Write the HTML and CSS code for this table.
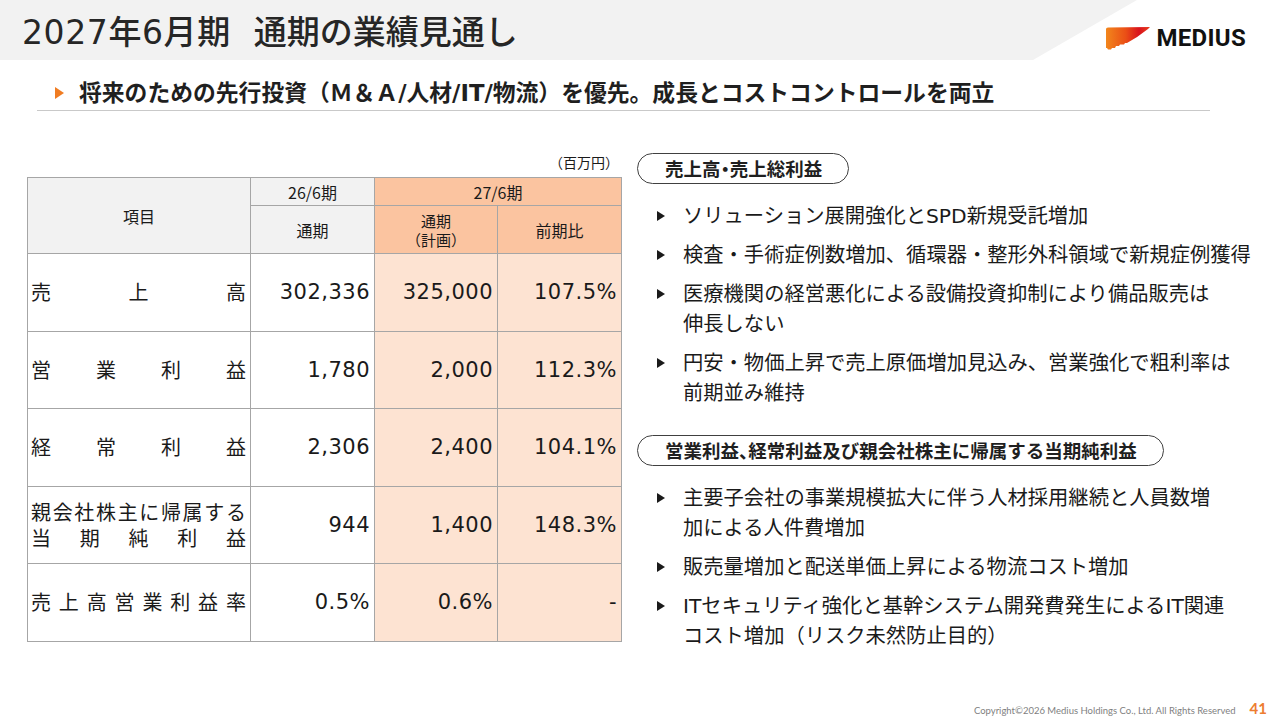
FILE: index.html
```html
<!DOCTYPE html>
<html lang="ja">
<head>
<meta charset="utf-8">
<title>2027年6月期 通期の業績見通し</title>
<link rel="stylesheet" href="styles.css">
</head>
<body>
<div class="slide">
  <header class="top">
    <h1 class="title"><span>2027年6月期</span><span>通期の業績見通し</span></h1>
    <div class="logo">
      <svg class="logo-mark" width="44" height="24" viewBox="0 0 44 24">
        <defs>
          <linearGradient id="lg" x1="0" y1="0" x2="1" y2="0">
            <stop offset="0" stop-color="#f2861c"/>
            <stop offset="0.45" stop-color="#ea4f16"/>
            <stop offset="0.75" stop-color="#d9121c"/>
            <stop offset="1" stop-color="#e8401e"/>
          </linearGradient>
        </defs>
        <path d="M0,3 Q0,1.5 2,1.5 L44,1 L42,3 Q32,11 21,17 L19,17 L18,18.5 L14,18.5 L13,20 L10,20 L9,22 L6,22 L5,23.5 L2,23.5 L1,22 L0,22 Z" fill="url(#lg)"/>
      </svg>
      <span class="logo-text">MEDIUS</span>
    </div>
  </header>

  <div class="lead">
    <span class="lead-mark"></span>
    <span class="lead-text">将来のための先行投資（Ｍ＆Ａ/人材/IT/物流）を優先。成長とコストコントロールを両立</span>
  </div>

  <main class="content">
    <section class="left">
      <div class="unit">（百万円）</div>
      <table class="fin">
        <colgroup>
          <col class="c1"><col class="c2"><col class="c3"><col class="c4">
        </colgroup>
        <tr class="h1">
          <th rowspan="2">項目</th>
          <th>26/6期</th>
          <th colspan="2" class="or">27/6期</th>
        </tr>
        <tr class="h2">
          <th>通期</th>
          <th class="or two">通期<br>（計画）</th>
          <th class="or">前期比</th>
        </tr>
        <tr class="d">
          <td class="lab"><div class="dist"><span>売</span><span>上</span><span>高</span></div></td>
          <td class="num">302,336</td>
          <td class="num or">325,000</td>
          <td class="num or">107.5%</td>
        </tr>
        <tr class="d">
          <td class="lab"><div class="dist"><span>営</span><span>業</span><span>利</span><span>益</span></div></td>
          <td class="num">1,780</td>
          <td class="num or">2,000</td>
          <td class="num or">112.3%</td>
        </tr>
        <tr class="d">
          <td class="lab"><div class="dist"><span>経</span><span>常</span><span>利</span><span>益</span></div></td>
          <td class="num">2,306</td>
          <td class="num or">2,400</td>
          <td class="num or">104.1%</td>
        </tr>
        <tr class="d">
          <td class="lab lab2">
            <div class="dist"><span>親</span><span>会</span><span>社</span><span>株</span><span>主</span><span>に</span><span>帰</span><span>属</span><span>す</span><span>る</span></div>
            <div class="dist"><span>当</span><span>期</span><span>純</span><span>利</span><span>益</span></div>
          </td>
          <td class="num">944</td>
          <td class="num or">1,400</td>
          <td class="num or">148.3%</td>
        </tr>
        <tr class="d">
          <td class="lab"><div class="dist"><span>売</span><span>上</span><span>高</span><span>営</span><span>業</span><span>利</span><span>益</span><span>率</span></div></td>
          <td class="num">0.5%</td>
          <td class="num or">0.6%</td>
          <td class="num or">-</td>
        </tr>
      </table>
    </section>

    <section class="right">
      <div class="sec">
        <div class="pill">売上高・売上総利益</div>
        <ul class="bullets">
          <li>ソリューション展開強化とSPD新規受託増加</li>
          <li>検査・手術症例数増加、循環器・整形外科領域で新規症例獲得</li>
          <li>医療機関の経営悪化による設備投資抑制により備品販売は<br>伸長しない</li>
          <li>円安・物価上昇で売上原価増加見込み、営業強化で粗利率は<br>前期並み維持</li>
        </ul>
      </div>
      <div class="sec">
        <div class="pill">営業利益、経常利益及び親会社株主に帰属する当期純利益</div>
        <ul class="bullets">
          <li>主要子会社の事業規模拡大に伴う人材採用継続と人員数増<br>加による人件費増加</li>
          <li>販売量増加と配送単価上昇による物流コスト増加</li>
          <li>ITセキュリティ強化と基幹システム開発費発生によるIT関連<br>コスト増加（リスク未然防止目的）</li>
        </ul>
      </div>
    </section>
  </main>

  <footer class="foot">
    <span class="copy">Copyright©2026 Medius Holdings Co., Ltd. All Rights Reserved</span>
    <span class="page">41</span>
  </footer>
</div>
</body>
</html>
```

FILE: styles.css
```css
* { box-sizing: border-box; margin: 0; padding: 0; }

html, body {
  width: 1280px;
  height: 720px;
  overflow: hidden;
  background: #ffffff;
}

body {
  font-family: "DejaVu Sans", "Noto Sans CJK JP", sans-serif;
  color: #1a1a1a;
}

.slide {
  width: 1280px;
  height: 720px;
  display: flex;
  flex-direction: column;
}

/* ---------- header ---------- */
.top {
  height: 60px;
  flex: none;
  display: flex;
  align-items: center;
  justify-content: space-between;
  position: relative;
}

.top::before {
  content: "";
  position: absolute;
  left: 0; top: 0; right: 0; bottom: 0;
  background: #f2f2f2;
  clip-path: polygon(0 0, 1137px 0, 1033px 60px, 0 60px);
}

.title {
  position: relative;
  display: flex;
  gap: 23px;
  padding: 4px 0 0 22px;
  font-size: 33px;
  font-weight: 500;
  line-height: 1;
  color: #262626;
}

.title span:first-child { letter-spacing: 0.6px; }

.logo {
  position: relative;
  display: flex;
  align-items: center;
  gap: 6px;
  padding-right: 34px;
  margin-top: 15px;
}

.logo-mark { display: block; }

.logo-text {
  font-family: Roboto, "Liberation Sans", sans-serif;
  font-weight: 700;
  font-size: 24px;
  line-height: 1;
  color: #111;
  letter-spacing: 0.3px;
}

/* ---------- lead ---------- */
.lead {
  flex: none;
  margin: 18px 70px 0 37px;
  padding: 0 0 2px 18px;
  display: flex;
  align-items: center;
  gap: 15px;
  border-bottom: 1px solid #c9c9c9;
}

.lead-mark {
  flex: none;
  width: 0;
  height: 0;
  border-left: 9px solid #f07c22;
  border-top: 6px solid transparent;
  border-bottom: 6px solid transparent;
}

.lead-text {
  font-size: 22.8px;
  font-weight: 700;
  line-height: 30px;
  color: #1f1f1f;
  white-space: nowrap;
}

/* ---------- content ---------- */
.content {
  flex: none;
  margin-top: 42px;
  padding-left: 27px;
  display: grid;
  grid-template-columns: 594px 1fr;
  column-gap: 16px;
}

.unit {
  text-align: right;
  font-size: 14px;
  line-height: 20px;
  padding-right: 2px;
  margin-bottom: 4px;
  color: #1a1a1a;
}

.fin {
  width: 594px;
  border-collapse: collapse;
  table-layout: fixed;
}

.fin .c1 { width: 223px; }
.fin .c2 { width: 124px; }
.fin .c3 { width: 123px; }
.fin .c4 { width: 124px; }

.fin th, .fin td {
  border: 1px solid #a6a6a6;
}

.fin th {
  background: #f2f2f2;
  font-family: "Noto Sans CJK JP", sans-serif;
  font-weight: 400;
  font-size: 16px;
  line-height: 20px;
  color: #1a1a1a;
  text-align: center;
  vertical-align: middle;
}

.fin th.or { background: #fbc4a0; }
.fin th.two { line-height: 19px; font-size: 15px; }

.fin tr.h1 { height: 28px; }
.fin tr.h2 { height: 48px; }
.fin tr.d { height: 77.5px; }

.fin td {
  vertical-align: middle;
}

.fin td.or { background: #fde3d2; }

.fin td.num {
  text-align: right;
  padding-right: 4px;
  font-size: 21px;
  letter-spacing: 0.5px;
  color: #1a1a1a;
}

.fin td.lab {
  padding: 0 4px 0 3px;
  font-family: "Noto Sans CJK JP", sans-serif;
  font-size: 20px;
  line-height: 26px;
  color: #1a1a1a;
}

.dist {
  display: flex;
  justify-content: space-between;
}

/* ---------- right ---------- */
.right {
  display: flex;
  flex-direction: column;
  gap: 27px;
}

.pill {
  align-self: flex-start;
  height: 31px;
  display: inline-flex;
  align-items: center;
  padding: 0 26px 0 27px;
  border: 1px solid #404040;
  border-radius: 16px;
  font-family: "Noto Sans CJK JP", sans-serif;
  font-size: 18.5px;
  font-weight: 700;
  color: #1f1f1f;
  line-height: 1.2;
  font-feature-settings: "halt";
}

.sec { display: flex; flex-direction: column; }

.bullets {
  list-style: none;
  margin-top: 17px;
  display: flex;
  flex-direction: column;
  gap: 9px;
}

.bullets li {
  display: flex;
  align-items: flex-start;
  font-size: 20.3px;
  line-height: 30px;
  color: #1a1a1a;
  white-space: nowrap;
}

.bullets li::before {
  content: "";
  flex: none;
  width: 0;
  height: 0;
  border-left: 8px solid #1a1a1a;
  border-top: 5px solid transparent;
  border-bottom: 5px solid transparent;
  margin: 10px 18px 0 20px;
}

/* ---------- footer ---------- */
.foot {
  margin-top: auto;
  display: flex;
  justify-content: flex-end;
  align-items: baseline;
  gap: 14px;
  padding: 0 13px 3px 0;
}

.copy {
  font-family: Lato, "Open Sans", sans-serif;
  font-size: 9.5px;
  color: #7f7f7f;
}

.page {
  font-family: Lato, "Open Sans", sans-serif;
  font-weight: 700;
  font-size: 15px;
  color: #ed7d31;
}
```
